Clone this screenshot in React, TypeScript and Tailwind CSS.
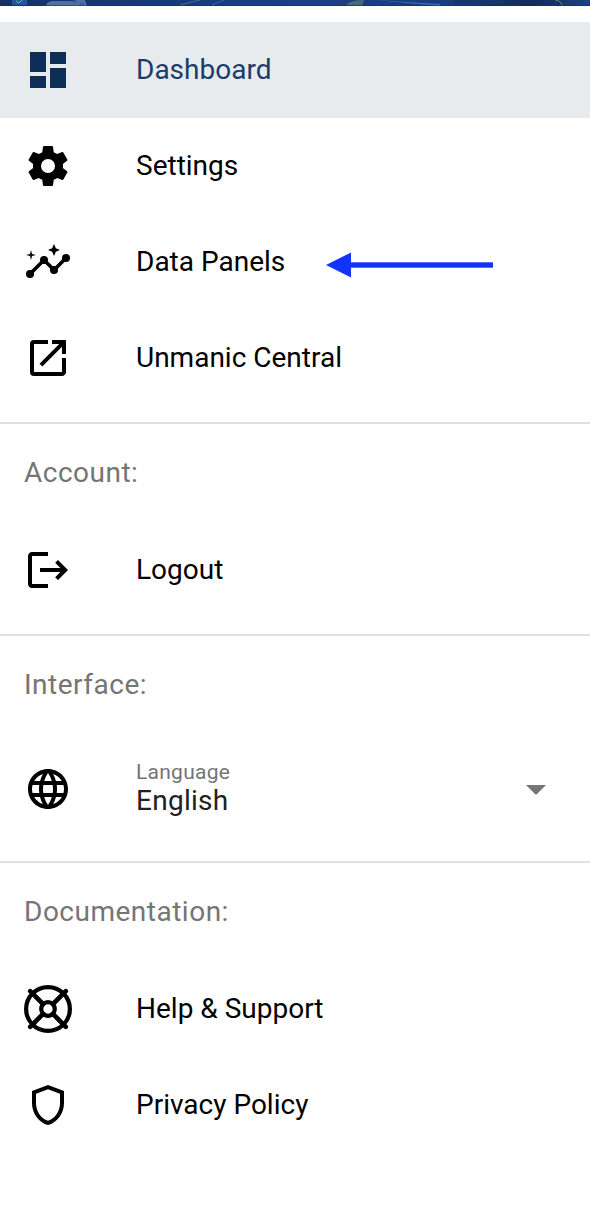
import type { ReactNode } from 'react'
import {
  MdArrowDropDown,
  MdDashboard,
  MdLanguage,
  MdLogout,
  MdOpenInNew,
  MdOutlineShield,
} from 'react-icons/md'

function Cog() {
  return (
    <svg viewBox="0 0 24 24" className="size-12" fill="currentColor">
      <path d="M12 15.5A3.5 3.5 0 0 1 8.5 12 3.5 3.5 0 0 1 12 8.5a3.5 3.5 0 0 1 3.5 3.5 3.5 3.5 0 0 1-3.5 3.5m7.43-2.53c.04-.32.07-.64.07-.97s-.03-.66-.07-1l2.11-1.63c.19-.15.24-.42.12-.64l-2-3.46c-.12-.22-.39-.31-.61-.22l-2.49 1c-.52-.39-1.06-.73-1.69-.98l-.37-2.65A.506.506 0 0 0 14 2h-4c-.25 0-.46.18-.5.42l-.37 2.65c-.63.25-1.17.59-1.69.98l-2.49-1c-.22-.09-.49 0-.61.22l-2 3.46c-.13.22-.07.49.12.64L4.57 11c-.04.34-.07.67-.07 1s.03.65.07.97l-2.11 1.66c-.19.15-.25.42-.12.64l2 3.46c.12.22.39.3.61.22l2.49-1.01c.52.4 1.06.74 1.69.99l.37 2.65c.04.24.25.42.5.42h4c.25 0 .46-.18.5-.42l.37-2.65c.63-.26 1.17-.59 1.69-.99l2.49 1.01c.22.08.49 0 .61-.22l2-3.46c.12-.22.07-.49-.12-.64z" />
    </svg>
  )
}

function Insights() {
  return (
    <svg viewBox="0 0 24 24" className="size-12" fill="currentColor">
      <path d="M3 18l7-7 5 5 6-6" fill="none" stroke="currentColor" strokeWidth="1.8" />
      <circle cx="3" cy="18" r="2" />
      <circle cx="10" cy="11" r="2" />
      <circle cx="15" cy="16" r="2" />
      <circle cx="21" cy="10" r="2" />
      <path d="M15 9l.94-2.07L18 6l-2.06-.93L15 3l-.92 2.07L12 6l2.08.93z" />
      <path d="M3.5 11L4 9l2-.5L4 8l-.5-2L3 8l-2 .5L3 9z" />
    </svg>
  )
}

function LifeRing() {
  return (
    <svg viewBox="0 0 48 48" className="size-12" fill="none" stroke="currentColor" strokeWidth="4.2">
      <circle cx="24" cy="24" r="21.9" />
      <circle cx="24" cy="24" r="6.8" />
      <path
        d="M6.2 6.2L19 19M29 29l12.8 12.8M41.8 6.2L29 19M19 29L6.2 41.8"
        strokeWidth="4.6"
        strokeLinecap="round"
      />
    </svg>
  )
}

function Banner() {
  return (
    <svg viewBox="0 0 590 6" className="block h-[6px] w-full" preserveAspectRatio="none">
      <defs>
        <linearGradient id="banner">
          <stop offset="0" stopColor="#143262" />
          <stop offset="0.3" stopColor="#163b78" />
          <stop offset="0.5" stopColor="#1a3e82" />
          <stop offset="0.75" stopColor="#193d7c" />
          <stop offset="0.9" stopColor="#122c55" />
          <stop offset="1" stopColor="#1c4081" />
        </linearGradient>
      </defs>
      <rect width="590" height="6" fill="url(#banner)" />
      <rect x="12" width="15" height="5" fill="#23569a" />
      <path d="M16 1l3 2 3-3" stroke="#7ba0c8" fill="none" />
      <path d="M46 6c0-3 3-5 9-5h18l4-1h8l2 6z" fill="#506f9d" />
      <path d="M73 2h4M80 4h4" stroke="#2867a4" strokeWidth="2" />
      <path d="M180 5l20-5" stroke="#4b6e84" />
      <path d="M212 5l12-5" stroke="#2f65a1" />
      <path d="M346 5q4-5 18-5l-2 6z" fill="#4a6977" />
      <path d="M374 0l66 4v2z" fill="#3a6ca1" />
      <rect x="454" width="50" height="4" fill="#173569" />
      <path d="M555 0q7 1 7 6" stroke="#6b806f" fill="none" />
      <rect y="5" width="590" height="1" fill="#102a66" opacity="0.5" />
    </svg>
  )
}

function Item({ icon, label, active = false }: { icon: ReactNode; label: string; active?: boolean }) {
  return (
    <li
      className={
        active
          ? 'flex h-24 items-center bg-[#e7ebee] px-6 text-[#1d3c69]'
          : 'flex h-24 items-center px-6'
      }
    >
      <span className={active ? 'w-28 text-5xl text-[#0f2d59]' : 'w-28 text-5xl'}>{icon}</span>
      <span>{label}</span>
    </li>
  )
}

function Header({ children }: { children: ReactNode }) {
  return (
    <h2 className="flex h-[98px] items-center px-6 tracking-[0.0179em] text-[#757575]">{children}</h2>
  )
}

function Separator() {
  return <hr className="mt-4 h-[2px] border-0 bg-[#e0e0e0]" />
}

export default function App() {
  return (
    <div className="h-[1222px] overflow-hidden bg-white font-['Roboto',sans-serif] text-[28px] leading-10 text-black">
      <Banner />

      {/* Main menu */}
      <ul className="pt-4">
        <Item active icon={<MdDashboard />} label="Dashboard" />
        <Item icon={<Cog />} label="Settings" />
        <li className="flex h-24 items-center px-6">
          <span className="w-28 text-5xl">
            <Insights />
          </span>
          <span>Data Panels</span>
          <svg viewBox="0 0 168 26" className="mt-[5px] ml-[41px] h-[26px] w-[168px]" fill="#1133fa">
            <path d="M0 13L25 0.5V25.5z" />
            <rect x="24" y="10.3" width="143" height="5.4" />
          </svg>
        </li>
        <Item icon={<MdOpenInNew />} label="Unmanic Central" />
      </ul>
      <Separator />

      {/* Account */}
      <Header>Account:</Header>
      <ul>
        <Item icon={<MdLogout />} label="Logout" />
      </ul>
      <Separator />

      {/* Interface */}
      <Header>Interface:</Header>
      <div className="flex h-[111px] items-center px-6 pb-0.5">
        <span className="w-28 text-5xl">
          <MdLanguage />
        </span>
        <div className="flex-1 tracking-[0.00937em]">
          <div className="text-[21px] leading-6 text-[#757575]">Language</div>
          <div className="leading-[34px] text-[#212121]">English</div>
        </div>
        <MdArrowDropDown className="mr-1.5 text-5xl text-[#757575]" />
      </div>
      <Separator />

      {/* Documentation */}
      <Header>Documentation:</Header>
      <ul>
        <Item icon={<LifeRing />} label="Help &amp; Support" />
        <Item icon={<MdOutlineShield />} label="Privacy Policy" />
      </ul>
    </div>
  )
}
